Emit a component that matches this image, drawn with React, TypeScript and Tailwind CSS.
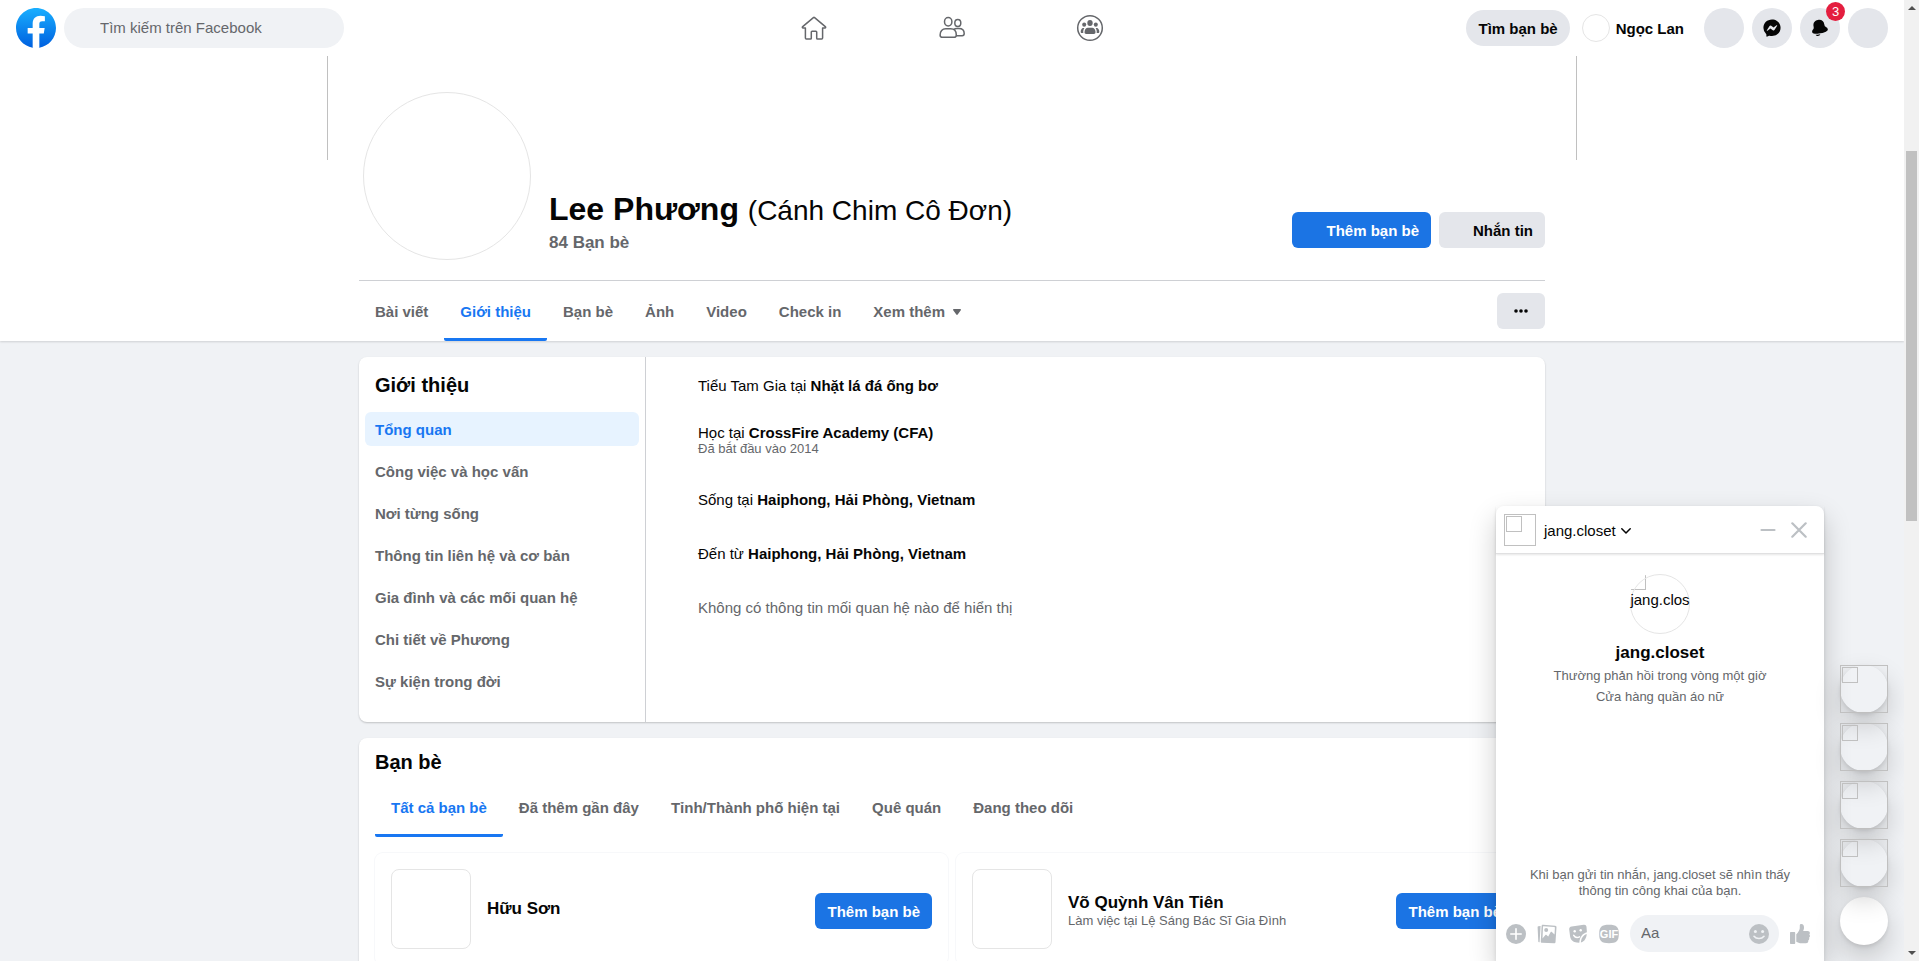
import React from "react";

const profileTabs = ["Bài viết", "Giới thiệu", "Bạn bè", "Ảnh", "Video", "Check in"];

const aboutSections = [
  "Tổng quan",
  "Công việc và học vấn",
  "Nơi từng sống",
  "Thông tin liên hệ và cơ bản",
  "Gia đình và các mối quan hệ",
  "Chi tiết về Phương",
  "Sự kiện trong đời",
];

const friendTabs = ["Tất cả bạn bè", "Đã thêm gần đây", "Tỉnh/Thành phố hiện tại", "Quê quán", "Đang theo dõi"];

const friends: { name: string; note?: string }[] = [
  { name: "Hữu Sơn" },
  { name: "Võ Quỳnh Vân Tiên", note: "Làm việc tại Lệ Sáng Bác Sĩ Gia Đình" },
];

function FacebookLogo() {
  return (
    <svg viewBox="0 0 36 36" className="size-10" aria-hidden="true">
      <defs>
        <linearGradient id="logo-fill" x1="50%" x2="50%" y1="97%" y2="0%">
          <stop offset="0%" stopColor="#0062e0" />
          <stop offset="100%" stopColor="#19afff" />
        </linearGradient>
      </defs>
      <path
        fill="url(#logo-fill)"
        d="M15 35.8C6.5 34.3 0 26.9 0 18 0 8.1 8.1 0 18 0s18 8.1 18 18c0 8.9-6.5 16.3-15 17.8l-1-.8h-4l-1 .8z"
      />
      <path
        fill="#fff"
        d="M25 23l.8-5H21v-3.5c0-1.4.5-2.5 2.7-2.5H26V7.4c-1.3-.2-2.7-.4-4-.4-4.1 0-7 2.5-7 7v4h-4.5v5H15v12.7c1 .2 2 .3 3 .3s2-.1 3-.3V23h4z"
      />
    </svg>
  );
}

function HomeIcon() {
  return (
    <svg viewBox="0 0 28 28" className="size-7" fill="none" stroke="#65676b" strokeWidth="1.5" strokeLinejoin="round" aria-hidden="true">
      <path d="M14.6 3.6 25.3 12.6C26 13.2 25.7 13.9 24.9 13.9H22.6V24.1C22.6 24.7 22.2 25.1 21.600 25.1H17.5C17 25.1 16.7 24.8 16.7 24.3V18C16.7 17.5 16.4 17.2 15.9 17.2H12.1C11.6 17.2 11.3 17.5 11.3 18V24.3C11.3 24.8 11 25.1 10.5 25.1H6.4C5.8 25.1 5.4 24.7 5.4 24.1V13.9H3.1C2.3 13.9 2 13.2 2.7 12.6L13.4 3.6C13.8 3.3 14.2 3.3 14.6 3.6Z" />
    </svg>
  );
}

function FriendsIcon() {
  return (
    <svg viewBox="0 0 28 28" className="size-7" fill="none" stroke="#65676b" strokeWidth="1.5" strokeLinejoin="round" aria-hidden="true">
      <ellipse cx="10.2" cy="7.8" rx="3.7" ry="4.2" />
      <ellipse cx="19.8" cy="9" rx="3" ry="3.5" />
      <path d="M7.8 14.7H12.6C16.2 14.7 18.3 17.3 18.3 20.9C18.3 22.5 17.6 23.3 16 23.3H4.4C2.8 23.3 2.1 22.5 2.1 20.9C2.1 17.3 4.2 14.7 7.8 14.7Z" />
      <path d="M15.9 15.6C16.6 14.9 17.6 14.6 18.8 14.6H20.9C24.2 14.6 26.2 16.7 26.2 19.6C26.2 21.2 25.5 21.7 24.2 21.7H18.3" />
    </svg>
  );
}

function GroupsIcon() {
  return (
    <svg viewBox="0 0 28 28" className="size-7" fill="#65676b" aria-hidden="true">
      <circle cx="14" cy="14" r="12.3" fill="none" stroke="#65676b" strokeWidth="1.5" />
      <ellipse cx="14" cy="8.9" rx="2.7" ry="3" />
      <ellipse cx="8.2" cy="10.6" rx="2" ry="2.2" />
      <ellipse cx="19.8" cy="10.6" rx="2" ry="2.2" />
      <path d="M11.5 13.7H16.5C18.5 13.7 19.5 16 19.5 18.3C19.5 19.4 18.9 20 17.9 20H10.1C9.1 20 8.5 19.4 8.5 18.3C8.5 16 9.5 13.7 11.5 13.7Z" />
      <path d="M7.2 14H8.4C7.5 15.3 7.1 17 7.3 19H5.8C5 19 4.7 18.5 4.7 17.7C4.8 15.8 5.7 14.1 7.2 14Z" />
      <path d="M20.8 14H19.6C20.5 15.3 20.9 17 20.7 19H22.2C23 19 23.3 18.5 23.3 17.7C23.2 15.8 22.3 14.1 20.8 14Z" />
    </svg>
  );
}

function MessengerIcon() {
  return (
    <svg viewBox="0 0 28 28" className="size-5" fill="#050505" aria-hidden="true">
      <path
        fillRule="evenodd"
        d="M14 2.042c6.76 0 12 4.952 12 11.64S20.76 25.322 14 25.322a13.091 13.091 0 0 1-3.474-.461.956.956 0 0 0-.641.047L7.5 25.959a.961.961 0 0 1-1.348-.849l-.065-2.134a.957.957 0 0 0-.322-.684A11.389 11.389 0 0 1 2 13.682C2 6.994 7.24 2.042 14 2.042ZM6.794 17.086a.57.57 0 0 0 .827.758l3.786-2.874a.722.722 0 0 1 .868 0l2.8 2.1a1.8 1.8 0 0 0 2.6-.481l3.525-5.592a.57.57 0 0 0-.827-.758l-3.786 2.874a.722.722 0 0 1-.868 0l-2.8-2.1a1.8 1.8 0 0 0-2.6.481Z"
      />
    </svg>
  );
}

function BellIcon() {
  return (
    <svg viewBox="0 0 28 28" className="size-5" fill="#050505" aria-hidden="true">
      <path d="M7.847 23.488C9.207 23.488 11.443 23.363 14.467 22.806 13.944 24.228 12.581 25.247 10.98 25.247 9.649 25.247 8.483 24.542 7.825 23.488L7.847 23.488ZM24.923 15.73C25.17 17.002 24.278 18.127 22.27 19.076 21.17 19.595 18.724 20.583 14.684 21.369 11.568 21.974 9.285 22.113 7.848 22.113 7.421 22.113 7.068 22.101 6.79 22.085 4.574 21.958 3.324 21.248 3.077 19.976 2.702 18.049 3.295 17.305 4.278 16.073L4.537 15.748C5.2 14.907 5.459 14.081 5.035 11.902 4.086 7.022 6.284 3.687 11.064 2.753 15.846 1.83 19.134 4.096 20.083 8.977 20.506 11.156 21.056 11.824 21.986 12.355L22.348 12.561C23.72 13.335 24.548 13.802 24.923 15.73Z" />
    </svg>
  );
}

function PlusIcon() {
  return (
    <svg viewBox="0 0 20 20" className="size-5" aria-hidden="true">
      <circle cx="10" cy="10" r="10" fill="#bcc0c4" />
      <path d="M10 4.8V15.2M4.8 10H15.2" stroke="#fff" strokeWidth="1.6" strokeLinecap="round" />
    </svg>
  );
}

function PhotosIcon() {
  return (
    <svg viewBox="0 0 20 20" className="size-5" aria-hidden="true">
      <path d="M1.3 2.2 3.6 1.9 2.6 18.2 2 18.2C1.5 18.1 1.3 17.9 1.3 17.4L.6 3.2C.6 2.6.8 2.3 1.3 2.2Z" fill="#bcc0c4" />
      <path d="M6 .8 18.2 1.7C19.1 1.8 19.5 2.2 19.5 3.1L18.5 18.2C18.4 19 18 19.4 17.2 19.3L5 18.7C4.1 18.6 3.8 18.2 3.8 17.4L4.6 2.1C4.7 1.2 5.1.8 6 .8Z" fill="#bcc0c4" />
      <path d="M6.4 2.3 17.2 3.1C17.7 3.1 17.9 3.4 17.9 3.8L17.5 10.4 14.9 7.9C14.5 7.5 14 7.6 13.7 8L11.2 12.5 9.5 10.9C9.1 10.6 8.7 10.7 8.4 11L5.5 14.6 6 2.8C6 2.5 6.1 2.3 6.4 2.3Z" fill="#fff" />
      <circle cx="9.2" cy="5.9" r="2" fill="#bcc0c4" />
    </svg>
  );
}

function StickerIcon() {
  return (
    <svg viewBox="0 0 20 20" className="size-5" aria-hidden="true">
      <path d="M3.7 2.5 15.7.8C17.3.6 18.3 1.3 18.5 2.8L18.9 8.3C15 9.3 11.8 12.5 11.3 18.8L8.7 18.6C5.5 18.2 2.7 16.2 2.1 12.5L1.2 5.6C1 3.9 1.9 2.8 3.7 2.5Z" fill="#bcc0c4" />
      <path d="M18.7 9.9C18.6 13.8 16.5 17.3 12.9 18.6C13 14.3 15.1 11.1 18.7 9.9Z" fill="#bcc0c4" />
      <circle cx="6.7" cy="7.3" r="1.2" fill="#fff" />
      <circle cx="12.7" cy="6.3" r="1.2" fill="#fff" />
      <path d="M5.7 11.3C6.9 13.2 9.3 13.9 11.5 12.8" fill="none" stroke="#fff" strokeWidth="1.5" strokeLinecap="round" />
    </svg>
  );
}

function GifIcon() {
  return (
    <svg viewBox="0 0 20 20" className="size-5" aria-hidden="true">
      <path d="M10 .8C17.5.8 19.8 3 19.8 10S17.5 19.200 10 19.2.2 17 .2 10 2.5.8 10 .8Z" fill="#bcc0c4" />
      <text x="10" y="14" textAnchor="middle" fontSize="11" fontWeight="700" fill="#fff" fontFamily="Liberation Sans, sans-serif">
        GIF
      </text>
    </svg>
  );
}

function SmileIcon() {
  return (
    <svg viewBox="0 0 20 20" className="size-5" aria-hidden="true">
      <circle cx="10" cy="10" r="10" fill="#bcc0c4" />
      <circle cx="6.4" cy="7.5" r="1.5" fill="#f0f2f5" />
      <circle cx="13.6" cy="7.5" r="1.5" fill="#f0f2f5" />
      <path d="M5 12.3C7.4 15.3 12.6 15.3 15 12.3" fill="none" stroke="#f0f2f5" strokeWidth="1.6" strokeLinecap="round" />
    </svg>
  );
}

function LikeIcon() {
  return (
    <svg viewBox="0 0 20 20" className="size-5" fill="#bcc0c4" aria-hidden="true">
      <path d="M1 8H4.2C4.8 8 5.2 8.4 5.2 9V19C5.2 19.6 4.8 20 4.2 20H1C.4 20 0 19.6 0 19V9C0 8.4.4 8 1 8Z" />
      <path d="M11.3 0C13.2 0 14.1 1.7 14 3.7C14 5 13.5 6 13.2 6.9H17.7C19 6.9 19.9 7.7 19.9 8.9C19.9 9.5 19.7 10 19.3 10.4C19.8 10.8 20 11.3 20 11.9C20 12.7 19.6 13.3 19 13.7C19.2 14 19.3 14.4 19.3 14.8C19.3 15.6 18.9 16.2 18.2 16.5C18.3 16.7 18.4 17 18.3 17.3C18.2 18.5 17.4 19.2 16 19.2H11.5C9.5 19.2 7.6 18.6 6.3 17.7V10.2C7.7 9 9.3 6.8 9.7 4.7C9.9 3.7 9.7 2.3 9.8 1.2C9.9.4 10.5 0 11.3 0Z" />
    </svg>
  );
}

function TabStrip({ items, active }: { items: string[]; active: string }) {
  return (
    <>
      {items.map((item) => (
        <a
          key={item}
          href="#"
          className={
            item === active
              ? "flex h-[60px] items-center rounded-xs border-b-3 border-[#1877f2] px-4 pt-[5px] text-[#1877f2]"
              : "flex h-[60px] items-center px-4 pt-0.5"
          }
        >
          {item}
        </a>
      ))}
    </>
  );
}

function TopBar() {
  return (
    <header className="relative z-10 grid h-14 shrink-0 grid-cols-[1fr_auto_1fr] items-center bg-white px-4">
      <div className="flex items-center gap-2">
        <a href="#" aria-label="Facebook">
          <FacebookLogo />
        </a>
        <input
          type="search"
          aria-label="Tìm kiếm trên Facebook"
          placeholder="Tìm kiếm trên Facebook"
          className="h-10 w-[280px] rounded-full bg-[#f0f2f5] pr-2 pb-0.5 pl-9 text-[15px] placeholder:text-[#65676b] placeholder:opacity-100"
        />
      </div>
      <nav className="flex">
        <a href="#" aria-label="Trang chủ" className="flex w-[138px] justify-center">
          <HomeIcon />
        </a>
        <a href="#" aria-label="Bạn bè" className="flex w-[138px] justify-center">
          <FriendsIcon />
        </a>
        <a href="#" aria-label="Nhóm" className="flex w-[138px] justify-center">
          <GroupsIcon />
        </a>
      </nav>
      <div className="flex items-center justify-end gap-2">
        <button className="h-9 rounded-full bg-[#e4e6eb] px-3 pt-0.5 text-[15px] font-bold">Tìm bạn bè</button>
        <a href="#" className="mr-3 ml-1 flex items-center gap-1.5 text-[15px] font-bold">
          <span className="size-7 rounded-full border border-[#e5e5e5]" />
          <span className="pt-0.5">Ngọc Lan</span>
        </a>
        <button aria-label="Tạo" className="size-10 rounded-full bg-[#e4e6eb]" />
        <button aria-label="Messenger" className="flex size-10 items-center justify-center rounded-full bg-[#e4e6eb]">
          <MessengerIcon />
        </button>
        <button aria-label="Thông báo" className="relative flex size-10 items-center justify-center rounded-full bg-[#e4e6eb]">
          <BellIcon />
          <span className="absolute -top-1.5 -right-[5px] flex size-[19px] items-center justify-center rounded-full bg-[#e41e3f] text-[13px] leading-4 text-white">
            3
          </span>
        </button>
        <button aria-label="Tài khoản" className="size-10 rounded-full bg-[#e4e6eb]" />
      </div>
    </header>
  );
}

function ProfileHeader() {
  return (
    <section className="relative bg-white shadow-[0_1px_2px_rgba(0,0,0,0.14)]">
      <div className="mx-auto h-[104px] max-w-[1250px] border-x border-[#c0c0c0]" />
      <div className="mx-auto max-w-[1186px]">
        <div className="-mt-[68px] flex items-end border-b border-[#ced0d4] pb-5 pl-1">
          <div className="size-[168px] shrink-0 rounded-full border border-[#e5e5e5]" />
          <div className="flex-1 pb-[7px] pl-[18px]">
            <h1 className="text-[32px] leading-[38px] font-bold">
              Lee Phương <span className="text-[28px] font-normal">(Cánh Chim Cô Đơn)</span>
            </h1>
            <a href="#" className="mt-[3px] block text-[17px] leading-5 font-bold text-[#65676b]">
              84 Bạn bè
            </a>
          </div>
          <div className="flex gap-2 pb-3 text-[15px] font-bold">
            <button className="h-9 rounded-md bg-[#1b74e4] pt-0.5 pr-3 pl-[34px] text-white">Thêm bạn bè</button>
            <button className="h-9 rounded-md bg-[#e4e6eb] pt-0.5 pr-3 pl-[34px]">Nhắn tin</button>
          </div>
        </div>
        <div className="flex items-center justify-between">
          <nav className="flex text-[15px] font-bold text-[#65676b]">
            <TabStrip items={profileTabs} active="Giới thiệu" />
            <button className="flex h-[60px] items-center gap-2 px-4 pt-0.5">
              Xem thêm
              <svg viewBox="0 0 8 6" className="h-1.5 w-2" fill="#65676b" aria-hidden="true">
                <path d="M.8 0H7.2C7.9 0 8.2.6 7.8 1.2L4.7 5.5C4.3 6.1 3.7 6.1 3.3 5.5L.2 1.2C-.2.6.1 0 .8 0Z" />
              </svg>
            </button>
          </nav>
          <button aria-label="Thêm" className="flex h-9 w-12 items-center justify-center rounded-md bg-[#e4e6eb]">
            <svg viewBox="0 0 14 4" className="h-1 w-3.5" fill="#050505" aria-hidden="true">
              <circle cx="2" cy="2" r="1.8" />
              <circle cx="7" cy="2" r="1.8" />
              <circle cx="12" cy="2" r="1.8" />
            </svg>
          </button>
        </div>
      </div>
    </section>
  );
}

function AboutCard() {
  return (
    <section className="flex rounded-lg bg-white text-[15px] shadow-[0_1px_2px_rgba(0,0,0,0.2)]">
      <div className="w-[287px] shrink-0 border-r border-[#ced0d4] px-1.5 pt-4 pb-6">
        <h2 className="px-2.5 text-xl leading-6 font-bold">Giới thiệu</h2>
        <nav className="mt-[15px] flex flex-col gap-2 font-bold text-[#65676b]">
          {aboutSections.map((item, i) => (
            <a
              key={item}
              href="#"
              className={
                i === 0
                  ? "flex h-[34px] items-center rounded-md bg-[#e7f3ff] px-2.5 pt-0.5 text-[#1877f2]"
                  : "flex h-[34px] items-center px-2.5 pt-0.5"
              }
            >
              {item}
            </a>
          ))}
        </nav>
      </div>
      <div className="flex-1 pt-5 pl-[52px] leading-[18px]">
        <p>
          Tiểu Tam Gia tại <a href="#" className="font-bold">Nhặt lá đá ống bơ</a>
        </p>
        <div className="mt-[29px]">
          <p>
            Học tại <a href="#" className="font-bold">CrossFire Academy (CFA)</a>
          </p>
          <p className="text-[13px] leading-[14px] text-[#65676b]">Đã bắt đầu vào 2014</p>
        </div>
        <p className="mt-[35px]">
          Sống tại <a href="#" className="font-bold">Haiphong, Hải Phòng, Vietnam</a>
        </p>
        <p className="mt-9">
          Đến từ <a href="#" className="font-bold">Haiphong, Hải Phòng, Vietnam</a>
        </p>
        <p className="mt-9 text-[#65676b]">Không có thông tin mối quan hệ nào để hiển thị</p>
      </div>
    </section>
  );
}

function FriendsCard() {
  return (
    <section className="rounded-lg bg-white px-4 pt-3 pb-4 shadow-[0_1px_2px_rgba(0,0,0,0.2)]">
      <h2 className="text-xl leading-6 font-bold">Bạn bè</h2>
      <nav className="mt-[3px] flex text-[15px] font-bold text-[#65676b]">
        <TabStrip items={friendTabs} active="Tất cả bạn bè" />
      </nav>
      <ul className="mt-4 grid grid-cols-2 gap-2">
        {friends.map((friend) => (
          <li key={friend.name} className="flex items-center gap-4 rounded-lg p-4 shadow-[0_0_0_1px_#f7f8fa]">
            <div className="size-20 shrink-0 rounded-lg border border-[#e5e5e5]" />
            <div className={friend.note ? "flex-1 pt-1" : "flex-1"}>
              <a href="#" className="block text-[17px] leading-5 font-bold">
                {friend.name}
              </a>
              {friend.note && <p className="text-[13px] leading-4 text-[#65676b]">{friend.note}</p>}
            </div>
            <button className="mt-1 h-9 rounded-md bg-[#1b74e4] px-3 pt-0.5 text-[15px] font-bold text-white">Thêm bạn bè</button>
          </li>
        ))}
      </ul>
    </section>
  );
}

function ChatPanel() {
  return (
    <section
      aria-label="jang.closet"
      className="flex h-[455px] w-[328px] flex-col rounded-t-lg bg-white shadow-[0_12px_28px_rgba(0,0,0,0.2),0_2px_4px_rgba(0,0,0,0.1)]"
    >
      <div className="flex h-12 shrink-0 items-center border-b border-[#e0e0e1] px-2 pt-px shadow-[0_1px_2px_rgba(0,0,0,0.1)]">
        <div className="size-8 border border-[#c0c0c0] p-px">
          <div className="size-4 border border-[#c0c0c0]" />
        </div>
        <button className="ml-2 flex items-center gap-[5px] pt-0.5 text-[15px]">
          jang.closet
          <svg viewBox="0 0 10 6" className="h-1.5 w-2.5" fill="none" stroke="#050505" strokeWidth="1.5" strokeLinecap="round" strokeLinejoin="round" aria-hidden="true">
            <path d="M.8.8 5 5 9.2.8" />
          </svg>
        </button>
        <div className="ml-auto flex items-center gap-[15px] pr-[9px]">
          <button aria-label="Thu nhỏ">
            <svg viewBox="0 0 16 16" className="size-4" stroke="#bcc0c4" strokeWidth="2.2" strokeLinecap="round" aria-hidden="true">
              <path d="M1.5 8H14.5" />
            </svg>
          </button>
          <button aria-label="Đóng">
            <svg viewBox="0 0 16 16" className="size-4" stroke="#bcc0c4" strokeWidth="2.2" strokeLinecap="round" aria-hidden="true">
              <path d="M1.3 1.3 14.7 14.7M14.7 1.3 1.3 14.7" />
            </svg>
          </button>
        </div>
      </div>
      <div className="flex flex-1 flex-col items-center pt-5 text-center">
        <div className="relative size-[60px] shrink-0">
          <div className="h-[22px] overflow-hidden rounded-t-full">
            <div className="size-4 border border-[#c0c0c0]" />
          </div>
          <div className="absolute inset-0 flex items-center justify-center rounded-full border border-[#e5e5e5] pb-2">
            <span className="text-[15px] leading-5 whitespace-nowrap">jang.clos</span>
          </div>
        </div>
        <h3 className="mt-[9px] text-[17px] leading-5 font-bold">jang.closet</h3>
        <p className="mt-0.5 text-[13px] leading-[21px] text-[#65676b]">
          Thường phản hồi trong vòng một giờ
          <br />
          Cửa hàng quần áo nữ
        </p>
        <p className="mt-auto mb-4 w-[280px] text-[13px] leading-4 text-[#65676b]">
          Khi bạn gửi tin nhắn, jang.closet sẽ nhìn thấy thông tin công khai của bạn.
        </p>
      </div>
      <div className="flex items-center gap-[11px] pr-3.5 pb-[9px] pl-2.5">
        <button aria-label="Mở thêm hành động"><PlusIcon /></button>
        <button aria-label="Đính kèm ảnh"><PhotosIcon /></button>
        <button aria-label="Chọn nhãn dán"><StickerIcon /></button>
        <button aria-label="Chọn file GIF"><GifIcon /></button>
        <div className="flex h-[37px] min-w-0 flex-1 items-center rounded-full bg-[#f0f2f5] pr-2.5 pl-[11px]">
          <input
            type="text"
            aria-label="Aa"
            placeholder="Aa"
            className="min-w-0 flex-1 bg-transparent text-[15px] placeholder:text-[#65676b] placeholder:opacity-100"
          />
          <button aria-label="Chọn biểu tượng cảm xúc"><SmileIcon /></button>
        </div>
        <button aria-label="Thích"><LikeIcon /></button>
      </div>
    </section>
  );
}

function ChatBubbles() {
  return (
    <div className="flex flex-col gap-2.5 pb-4">
      {[1, 2, 3, 4].map((n) => (
        <button
          key={n}
          aria-label={`Đoạn chat ${n}`}
          className="relative size-12 rounded-full shadow-[0_12px_28px_rgba(0,0,0,0.2),0_2px_4px_rgba(0,0,0,0.1)]"
        >
          <span className="absolute inset-0 border border-[#c0c0c0] p-px">
            <span className="block size-4 border border-[#c0c0c0]" />
          </span>
        </button>
      ))}
      <button
        aria-label="Tin nhắn mới"
        className="size-12 rounded-full bg-white shadow-[0_12px_28px_rgba(0,0,0,0.2),0_2px_4px_rgba(0,0,0,0.1)]"
      />
    </div>
  );
}

function ScrollTrack() {
  return (
    <div className="flex w-[15px] shrink-0 flex-col items-center justify-between bg-[#f1f1f1] py-1.5" aria-hidden="true">
      <svg viewBox="0 0 8 4" className="h-1 w-2" fill="#505050">
        <path d="M4 0 8 4H0Z" />
      </svg>
      <div className="flex w-[11px] flex-1 flex-col pb-1">
        <div className="flex-141" />
        <div className="flex-370 bg-[#c1c1c1]" />
        <div className="flex-426" />
      </div>
      <svg viewBox="0 0 8 4" className="h-1 w-2" fill="#505050">
        <path d="M4 4 8 0H0Z" />
      </svg>
    </div>
  );
}

export default function App() {
  return (
    <div className="flex h-screen overflow-hidden font-['Liberation_Sans',Arial,sans-serif] text-[#050505]">
      <div className="relative min-w-0 flex-1 overflow-hidden bg-[#f0f2f5]">
        <TopBar />
        <ProfileHeader />
        <main className="mx-auto mt-4 flex max-w-[1186px] flex-col gap-4">
          <AboutCard />
          <FriendsCard />
        </main>
        <div className="absolute right-4 bottom-0 flex items-end gap-4">
          <ChatPanel />
          <ChatBubbles />
        </div>
      </div>
      <ScrollTrack />
    </div>
  );
}
